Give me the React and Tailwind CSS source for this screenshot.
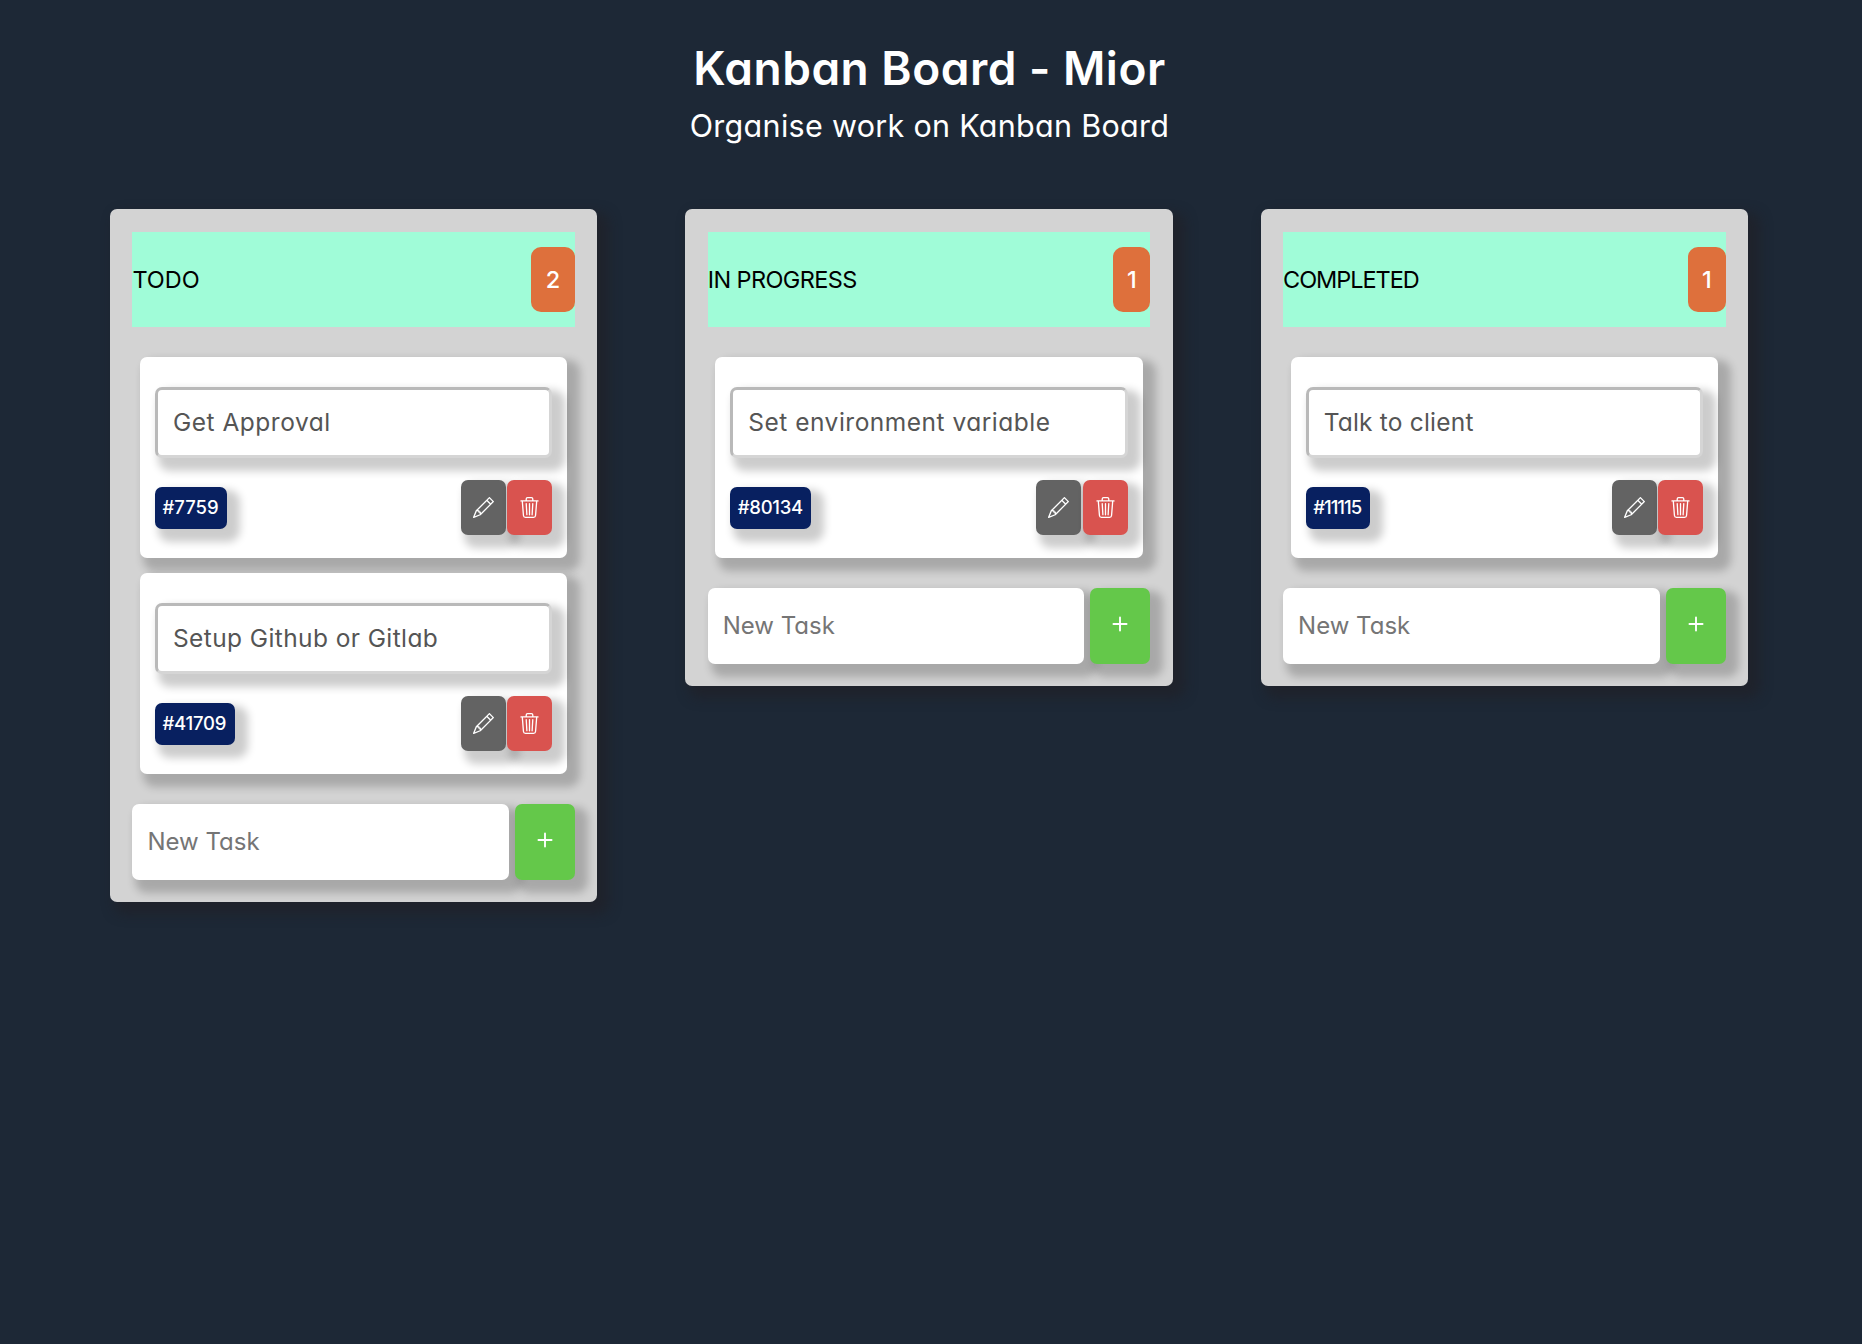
import { BsPencil, BsTrash3, BsPlus } from "react-icons/bs";

const columns = [
  {
    title: "TODO",
    titleClass: "",
    badgeClass: "w-11",
    tasks: [
      { text: "Get Approval", textClass: "tracking-[0.5px]", id: "#7759", idClass: "w-[72px]" },
      { text: "Setup Github or Gitlab", textClass: "tracking-[0.4px]", id: "#41709", idClass: "w-20 tracking-[-0.2px]" },
    ],
  },
  {
    title: "IN PROGRESS",
    titleClass: "tracking-[-0.6px]",
    badgeClass: "w-[37px]",
    tasks: [
      { text: "Set environment variable", textClass: "tracking-[0.5px]", id: "#80134", idClass: "w-[81px] tracking-[-0.3px]" },
    ],
  },
  {
    title: "COMPLETED",
    titleClass: "tracking-[-1.05px]",
    badgeClass: "w-[37.5px]",
    tasks: [
      { text: "Talk to client", textClass: "tracking-[0.2px]", id: "#11115", idClass: "w-16 tracking-[-1px]" },
    ],
  },
];

const raised = "shadow-[8px_8px_8px_5px_rgba(0,0,0,0.2)]";

function Task({ text, textClass, id, idClass }) {
  return (
    <article className={`mx-[7.6px] flex h-[201px] flex-col rounded-[7px] bg-white px-[15px] pt-[30px] ${raised}`}>
      <div className={`flex h-[71px] items-center rounded-[7px] border-3 border-t-[#b9b9b9] border-l-[#b9b9b9] border-r-[#d5d5d5] border-b-[#d5d5d5] bg-white pl-[15px] text-[24.5px] text-[#555] ${raised}`}>
        <span className={textClass}>{text}</span>
      </div>
      <div className="mt-[22px] flex items-start justify-between">
        <span className={`mt-[7px] flex h-[42px] items-center rounded-[7px] bg-[#082060] pl-[7.5px] text-[18.5px] font-medium text-white ${raised} ${idClass}`}>
          {id}
        </span>
        <div className="flex gap-[1.5px] text-white">
          <button aria-label="Edit task" className={`flex h-[55px] w-[45px] items-center justify-center rounded-[7px] bg-[#636363] ${raised}`}>
            <BsPencil size={21} />
          </button>
          <button aria-label="Delete task" className={`flex h-[55px] w-[45px] items-center justify-center rounded-[7px] bg-[#d9534f] ${raised}`}>
            <BsTrash3 size={21} />
          </button>
        </div>
      </div>
    </article>
  );
}

function Column({ title, titleClass, badgeClass, tasks }) {
  return (
    <section className="rounded-[7px] bg-[#d3d3d3] px-[22.4px] pt-[23px] pb-[22px] shadow-[8px_8px_12px_4px_rgba(34,30,34,0.5)]">
      <div className="flex h-[95px] items-center justify-between bg-[#a0fcd8] text-black">
        <h2 className={titleClass}>{title}</h2>
        <span className={`flex h-[65px] items-center justify-center rounded-[10px] bg-[#de703c] font-medium text-white ${badgeClass}`}>
          {tasks.length}
        </span>
      </div>
      <div className="mt-[30px] flex flex-col gap-[15px]">
        {tasks.map((task) => (
          <Task key={task.id} {...task} />
        ))}
      </div>
      <div className="mt-[30px] flex h-[76px] gap-[6px]">
        <div className={`flex flex-1 items-center rounded-[7px] bg-white pl-[15px] text-[24px] text-[#757575] ${raised}`}>
          New Task
        </div>
        <button aria-label="Add task" className={`flex w-[60px] items-center justify-center rounded-[7px] bg-[#64c84a] pb-1 text-white ${raised}`}>
          <BsPlus size={30} />
        </button>
      </div>
    </section>
  );
}

export default function App() {
  return (
    <main className="min-h-screen bg-[#1d2836] font-['Inter',sans-serif] text-[23.5px] [font-feature-settings:'cv11']">
      <header className="flex flex-col items-center pt-[35px] pr-[3px] text-white">
        <h1 className="text-[46px] leading-[66px] font-semibold tracking-[0.5px]">Kanban Board - Mior</h1>
        <p className="text-[30.5px] leading-[50px] font-normal tracking-[0.3px]">Organise work on Kanban Board</p>
      </header>
      <div className="mt-[58px] ml-[110px] grid w-[1638px] grid-cols-3 items-start gap-[88px]">
        {columns.map((column) => (
          <Column key={column.title} {...column} />
        ))}
      </div>
    </main>
  );
}
